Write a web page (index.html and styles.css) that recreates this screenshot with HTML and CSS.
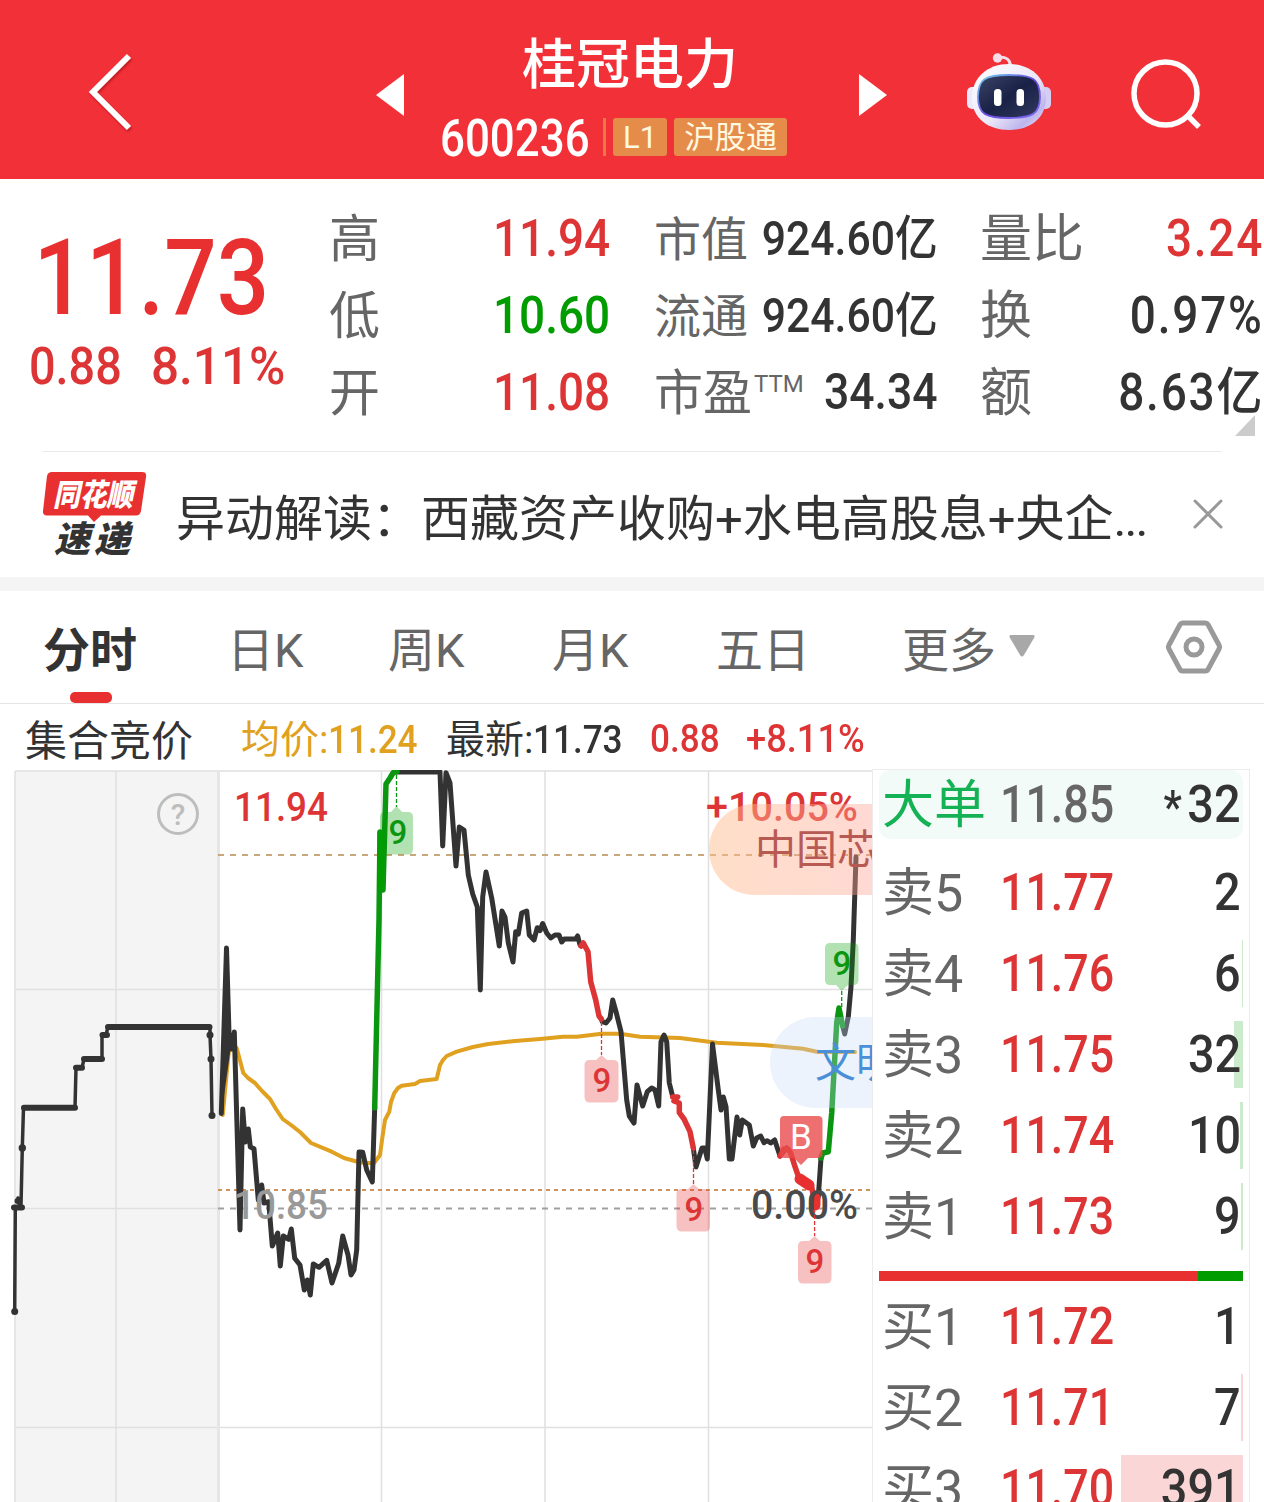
FILE: index.html
```html
<!DOCTYPE html>
<html lang="zh-CN">
<head>
    <meta charset="UTF-8">
    <meta name="viewport" content="width=device-width, initial-scale=1.0">
    <title>桂冠电力 600236</title>
    <link rel="stylesheet" href="styles.css">
</head>
<body>
    <header class="header">
        <svg class="back" width="46" height="80" viewBox="0 0 46 80"><path d="M42 4 L6 40 L42 76" fill="none" stroke="#fff" stroke-width="6"/></svg>
        <svg class="prev" width="28" height="42" viewBox="0 0 28 42"><path d="M28 0 V42 L0 21 Z" fill="#fff"/></svg>
        <div class="stock">
            <h1>桂冠电力</h1>
            <div class="stock-code">
                <span class="code num">600236</span>
                <i class="sliver"></i>
                <span class="badge level">L1</span>
                <span class="badge">沪股通</span>
            </div>
        </div>
        <svg class="next" width="28" height="42" viewBox="0 0 28 42"><path d="M0 0 V42 L28 21 Z" fill="#fff"/></svg>
        <svg class="robot" width="86" height="80" viewBox="966 52 86 80">
            <defs>
                <linearGradient id="shell" x1="0" y1="0" x2="1" y2="1">
                    <stop offset="0" stop-color="#fff"/>
                    <stop offset="0.55" stop-color="#ece8f8"/>
                    <stop offset="0.8" stop-color="#bdb6ee"/>
                    <stop offset="1" stop-color="#f5e6f0"/>
                </linearGradient>
                <linearGradient id="rim" x1="0" y1="0" x2="1" y2="1">
                    <stop offset="0" stop-color="#6fd6ea"/>
                    <stop offset="0.5" stop-color="#6a4be0"/>
                    <stop offset="1" stop-color="#7d6cf0"/>
                </linearGradient>
                <linearGradient id="visor" x1="0" y1="0" x2="1" y2="1">
                    <stop offset="0" stop-color="#3b4468"/>
                    <stop offset="0.5" stop-color="#1a2146"/>
                    <stop offset="1" stop-color="#323a60"/>
                </linearGradient>
            </defs>
            <path d="M998 57.500 Q1010 56 1010.500 66" fill="none" stroke="#f3dfe9" stroke-width="3"/>
            <circle cx="997.500" cy="58" r="4.700" fill="#f6dde8"/>
            <rect x="967" y="87" width="12" height="22" rx="5" fill="#eee9fa"/>
            <rect x="1039" y="87" width="12" height="22" rx="5" fill="#d5cdf4"/>
            <path d="M1009 64 C1030 64 1046 77 1046 98 C1046 118 1030 130 1009 130 C988 130 972 118 972 98 C972 77 988 64 1009 64 Z" fill="url(#shell)"/>
            <path d="M1009 75 C1033 75 1040 79 1040 97 C1040 114 1032 118 1009 118 C986 118 978 114 978 97 C978 79 985 75 1009 75 Z" fill="url(#visor)" stroke="url(#rim)" stroke-width="1.800"/>
            <rect x="994" y="89" width="7.500" height="17" rx="3.500" fill="#fff"/>
            <rect x="1016.500" y="89" width="7.500" height="17" rx="3.500" fill="#fff"/>
        </svg>
        <svg class="search" width="72" height="72" viewBox="0 0 72 72"><circle cx="35.500" cy="35.500" r="31.500" fill="none" stroke="#fff" stroke-width="5.500"/><path d="M56 56 L69 69" stroke="#fff" stroke-width="5.500"/></svg>
    </header>

    <section class="quote">
        <div class="price-box">
            <div class="price num">11.73</div>
            <div class="change"><span class="num">0.88</span><span class="num">8.11%</span></div>
        </div>
        <dl class="stats range">
            <dt>高</dt><dd class="num up">11.94</dd>
            <dt>低</dt><dd class="num down">10.60</dd>
            <dt>开</dt><dd class="num up">11.08</dd>
        </dl>
        <dl class="stats value">
            <dt>市值</dt><dd class="num">924.60亿</dd>
            <dt>流通</dt><dd class="num">924.60亿</dd>
            <dt class="pe">市盈<sup>TTM</sup></dt><dd class="num pe-num">34.34</dd>
        </dl>
        <dl class="stats trade">
            <dt>量比</dt><dd class="num up">3.24</dd>
            <dt>换</dt><dd class="num">0.97%</dd>
            <dt>额</dt><dd class="num">8.63亿</dd>
        </dl>
        <i class="corner"></i>
    </section>

    <section class="news">
        <svg class="news-logo" width="106" height="88" viewBox="42 470 106 88">
            <path d="M52 472 H142 Q147 472 146 477 L141 511 Q140 515.500 136 515.500 H101 L94 522 L88 515.500 H47 Q42.500 515.500 43 511 L47 476 Q48 472 52 472 Z" fill="#e93030"/>
            <text class="logo-top" x="53" y="506" textLength="80" lengthAdjust="spacingAndGlyphs">同花顺</text>
            <text class="logo-bottom" x="54" y="552" textLength="76">速递</text>
        </svg>
        <p>异动解读：西藏资产收购+水电高股息+央企<span>...</span></p>
        <svg class="close" width="30" height="30" viewBox="0 0 30 30"><path d="M2 2 L28 28 M28 2 L2 28" stroke="#999" stroke-width="3" stroke-linecap="round"/></svg>
    </section>

    <nav class="tabs">
        <a class="tab active">分时</a>
        <a class="tab">日K</a>
        <a class="tab">周K</a>
        <a class="tab">月K</a>
        <a class="tab">五日</a>
        <a class="tab more">更多<svg width="26" height="22" viewBox="0 0 26 22"><path d="M2 0 H24 Q26.500 0 25 3 L15 20 Q13 23 11 20 L1 3 Q-0.500 0 2 0 Z" fill="#a8a8a8"/></svg></a>
        <svg class="setting" width="56" height="54" viewBox="0 0 56 54"><path d="M16.500 3 H39.500 Q41 3 42 4.500 L53 25 Q54 27 53 29 L42 49.500 Q41 51 39.500 51 H16.500 Q15 51 14 49.500 L3 29 Q2 27 3 25 L14 4.500 Q15 3 16.500 3 Z" fill="none" stroke="#999" stroke-width="5"/><circle cx="28" cy="27" r="8" fill="none" stroke="#999" stroke-width="5"/></svg>
    </nav>

    <div class="legend">
        <span class="auction">集合竞价</span>
        <span class="avg">均价:<b class="num">11.24</b></span>
        <span class="last">最新:<b class="num">11.73</b></span>
        <span class="num diff">0.88</span>
        <span class="num pct">+8.11%</span>
    </div>

    <main class="market">
        <div class="chart">
            <svg width="872" height="732" viewBox="0 770 872 732">
                <!-- call auction area and grid -->
                <rect x="15" y="771" width="204" height="731" fill="#f4f4f4"/>
                <path class="grid" d="M15 771 H872 M15 989.500 H872 M15 1208.500 H219 M15 1427.500 H872 M15 771 V1502 M116 771 V1502 M381.500 771 V1502 M545 771 V1502 M708.500 771 V1502"/>
                <path d="M218.500 771 V1502" stroke="#e6e6e6" stroke-width="3"/>
                <path d="M218 855 H872" stroke="#c8a87a" stroke-width="2" stroke-dasharray="6 6"/>
                <path d="M218 1190 H872" stroke="#cd935c" stroke-width="2" stroke-dasharray="4 4"/>
                <path d="M218 1208.500 H872" stroke="#a0a0a0" stroke-width="2" stroke-dasharray="6 6"/>
                <circle cx="178" cy="814" r="19.500" fill="none" stroke="#bdbdbd" stroke-width="3"/>
                <text class="help" x="178" y="825" text-anchor="middle">?</text>

                <!-- labels under the curve -->
                <text class="axis up" x="234" y="821" textLength="94" lengthAdjust="spacingAndGlyphs">11.94</text>
                <text class="axis up" x="706" y="821" textLength="152" lengthAdjust="spacingAndGlyphs">+10.05%</text>

                <!-- average price -->
                <polyline class="line avg-line" points="222.700,1115 228.700,1052 231.700,1048 236.700,1048 243.300,1073 248,1078 255,1083 262,1091 270,1099 276,1109 282.700,1119 291,1125 300,1132 311,1143 331.700,1151.700 344,1158 358.300,1162 366,1163 374,1163 380,1155 382,1140 385,1120 389.300,1111.700 391,1102 394.300,1093 398,1088 401.700,1085.700 415,1084 420,1081 436.700,1079 440,1065 443,1060 446.700,1056 456.700,1051.700 473,1047 488.300,1044 515,1041 540,1039 563,1036.700 576.700,1036.700 601.700,1033.700 620,1033.700 640,1036.700 680,1038 716.700,1042.700 763,1045 803,1048.700 818,1052 855,1052"/>

                <!-- call auction -->
                <polyline class="line auction-line" points="14.700,1311.600 15.300,1207.600 20,1207 18,1198 21,1206 22.300,1148 23.500,1107.800 75,1107.800 76,1067.800 82,1067.800 84,1059 102,1059 102,1035 106,1035 108,1027 210,1027 210,1035 211,1059 212,1115.500"/>
                <path class="auction-thick" d="M14 1207.600 H22 M17.500 1201 H19 M24 1107.800 H75 M76 1067.800 H82 M84 1059 H102 M102.500 1035 H107 M108 1027 H209.500"/>
                <g fill="#333">
                    <circle cx="14.700" cy="1311.500" r="3.500"/>
                    <circle cx="22.300" cy="1148" r="3.700"/>
                    <circle cx="210" cy="1035" r="3.500"/>
                    <circle cx="211" cy="1059" r="3.500"/>
                    <circle cx="212" cy="1115.500" r="3.500"/>
                </g>

                <!-- price -->
                <polyline class="line" points="221.300,1113.500 226.500,948 229,1033 232,1049 234.300,1032 240,1230 242.700,1109 245.300,1142 248.300,1129 250.300,1147 254,1148.700 258.300,1200 261.700,1185 264,1203 268.700,1201.700 272.300,1246 277.700,1233 280.300,1266 283.300,1236 288.700,1239.300 291.300,1229 294.700,1258.300 300,1265 304.300,1290 307.300,1280 310.300,1295 313.300,1264 319,1267.300 326.700,1260.300 332,1283 338.700,1263.300 342.700,1236 348,1255 351,1275 354,1270 356.700,1250 359,1152 362.700,1152.300 366.700,1170 372.300,1182 374.700,1107.700"/>
                <path d="M226.500 948 L222 1110 L231 1046 Z" fill="#333"/>
                <polyline class="line" points="396,772 440,772 442.700,846 446,772.700 450,783 456,866 459.300,827 464,830 468.300,875 472.700,894 477.300,907 480.300,990 482.700,897 486,872 491.700,898 499.300,946 502,911 505,917 508.300,943 513,962 515.700,931.700 518.300,934 521.700,913 526.700,911 529.300,935 534,940 537.300,927.700 540,930.700 542.700,923.500 546.700,933 550.700,938 555,935 559,935 561.700,942 564.300,939 575.700,939 577.700,936 580,945"/>
                <polyline class="line" points="601.300,1019 602.300,1021.700 606,1023 610,1018 612.700,1000 616,1011.700 621,1031.700 626.700,1100 629.300,1116 634,1123 637,1085 642.700,1106 647.300,1091.700 651.700,1088 655,1090 658.700,1106 661,1041.700 664,1035 666.700,1041.700 669.300,1083 672.700,1096.700"/>
                <polyline class="line" points="693.300,1148 696,1167 702,1148 704.700,1148 707.300,1159 712.500,1044 718.300,1090 721,1110 723.300,1097 726,1106.700 729.300,1159 732,1159 737,1117 739.700,1135 742.300,1120 749.300,1125 753.300,1146 756.700,1138 760.700,1136 764,1142.700 767.300,1140.700 770.700,1143 774.700,1140 780,1156 786.700,1148"/>
                <polyline class="line" points="815,1206 818.300,1196.700 821,1158"/>
                <polyline class="line" points="842.700,1026 844.700,1034 848.300,1016.700 851,987 853.300,940 856,857"/>
                <polyline class="line red-line" points="581,946 583.300,943 588,951.700 590.700,981.700 595.700,1000 599,1016 601.300,1019"/>
                <polyline class="line red-line" points="672.700,1097 677.700,1097 674,1101 679.300,1103 679.300,1112.700 684,1119 690,1131.700 693.300,1148"/>
                <polyline class="line red-line" points="780,1156 784,1149 788,1149 790.700,1153 795,1166.700 799.300,1179 806.700,1181.700 811.700,1186.700 815,1206"/>
                <path d="M800 1179 L809 1185 M815 1198 V1205" stroke="#e93030" stroke-width="11" stroke-linecap="round"/>
                <polyline class="line green-line" points="374.700,1107.700 379,920 380,832 383,890 386,784 390,778 393.300,772.500 397,771.500"/>
                <path d="M380.500 832 V890" stroke="#009c00" stroke-width="6"/>
                <polyline class="line green-line" points="821,1158 822.700,1153 828.300,1151.700 831.700,1113 836.700,1023 839,1008 842.700,1026"/>

                <text class="axis" fill="#999" x="234" y="1219" textLength="94" lengthAdjust="spacingAndGlyphs">10.85</text>
                <text class="axis" fill="#4a4a4a" x="751" y="1219" textLength="107" lengthAdjust="spacingAndGlyphs">0.00%</text>

                <!-- signal tags -->
                <g class="tag-red">
                    <path class="leader" d="M601.500 1022 V1055 M693.500 1150 V1184 M814.600 1209 V1236"/>
                    <path d="M590 1060 H596 L601.500 1055 L607 1060 H613 Q618.500 1060 618.500 1065 V1097 Q618.500 1102.500 613 1102.500 H590 Q584.500 1102.500 584.500 1097 V1065 Q584.500 1060 590 1060 Z"/>
                    <path d="M682 1189 H688 L693.500 1184 L699 1189 H705 Q710 1189 710 1194 V1226 Q710 1231.500 705 1231.500 H682 Q676.500 1231.500 676.500 1226 V1194 Q676.500 1189 682 1189 Z"/>
                    <path d="M803 1241 H809 L814.600 1236 L820 1241 H826 Q831.500 1241 831.500 1246 V1278 Q831.500 1283.500 826 1283.500 H803 Q798 1283.500 798 1278 V1246 Q798 1241 803 1241 Z"/>
                    <text x="602" y="1092">9</text>
                    <text x="694" y="1221">9</text>
                    <text x="815" y="1273">9</text>
                </g>
                <g class="tag-green">
                    <path class="leader" d="M396.500 775 V807 M841.700 991 V1007"/>
                    <path d="M385 812 H391 L396.500 806 L402 812 H408 Q413 812 413 817 V849 Q413 854.500 408 854.500 H385 Q380 854.500 380 849 V817 Q380 812 385 812 Z"/>
                    <path d="M830 943 H853 Q858.500 943 858.500 948 V980 Q858.500 985 853 985 H848 L841.700 991 L836 985 H830 Q825 985 825 980 V948 Q825 943 830 943 Z"/>
                    <text x="398" y="844">9</text>
                    <text x="842" y="975">9</text>
                </g>
                <path d="M784 1116 H818 Q822.500 1116 822.500 1120 V1154 Q822.500 1158 818 1158 H808 L801 1165 L794 1158 H784 Q780 1158 780 1154 V1120 Q780 1116 784 1116 Z" fill="#ea4b4b" fill-opacity="0.800"/>
                <text class="buy-mark" x="801" y="1149">B</text>
            </svg>
            <span class="bullet hot">中国芯</span>
            <span class="bullet cool">文明</span>
        </div>

        <div class="book">
            <div class="row big"><span class="label">大单</span><span class="num cost">11.85</span><span class="num qty"><small>*</small>32</span></div>
            <div class="row"><span class="label">卖5</span><span class="num cost">11.77</span><span class="num qty">2</span></div>
            <div class="row"><span class="label">卖4</span><span class="num cost">11.76</span><span class="num qty">6</span><i class="vol sell" style="width:1px"></i></div>
            <div class="row"><span class="label">卖3</span><span class="num cost">11.75</span><span class="num qty">32</span><i class="vol sell" style="width:9px"></i></div>
            <div class="row"><span class="label">卖2</span><span class="num cost">11.74</span><span class="num qty">10</span><i class="vol sell" style="width:3px"></i></div>
            <div class="row"><span class="label">卖1</span><span class="num cost">11.73</span><span class="num qty">9</span><i class="vol sell" style="width:2px"></i></div>
            <div class="ratio"><i style="width:319px"></i></div>
            <div class="row"><span class="label">买1</span><span class="num cost">11.72</span><span class="num qty">1</span></div>
            <div class="row"><span class="label">买2</span><span class="num cost">11.71</span><span class="num qty">7</span><i class="vol buy" style="width:2px"></i></div>
            <div class="row"><span class="label">买3</span><span class="num cost">11.70</span><span class="num qty">391</span><i class="vol buy" style="width:122px"></i></div>
        </div>
    </main>
</body>
</html>
```
FILE: styles.css
```css
* {
    box-sizing: border-box;
}
body {
    margin: 0;
    width: 1264px;
    height: 1502px;
    overflow: hidden;
    background: #fff;
    color: #333;
    font-family: Roboto, "Noto Sans CJK SC", sans-serif;
}
h1, p, dl, dt, dd {
    margin: 0;
    font-weight: 400;
}
svg {
    display: block;
    flex: none;
}
.num {
    display: inline-block;
    font-weight: 500;
    white-space: nowrap;
    transform: scaleX(0.9);
}
.up {
    color: #dd3535;
    fill: #dd3535;
}
.down {
    color: #009c00;
}

/* header */
.header {
    display: flex;
    align-items: flex-start;
    height: 179px;
    background: #f23038;
    color: #fff;
}
.back {
    margin: 52px 0 0 87px;
    filter: drop-shadow(1px 2px 1px rgba(120,0,0,0.4));
}
.prev {
    margin: 74px 0 0 243px;
}
.stock {
    width: 455px;
    padding-top: 34px;
}
.stock h1 {
    padding-left: 118px;
    font-size: 54px;
    line-height: 64px;
    font-weight: 500;
}
.stock-code {
    display: flex;
    align-items: center;
    height: 38px;
    margin-top: 20px;
    padding-left: 36px;
}
.stock-code .code {
    width: 163px;
    padding-top: 4px;
    font-size: 51px;
    line-height: 38px;
    transform-origin: left;
    transform: scaleX(0.86);
}
.sliver {
    width: 3px;
    height: 38px;
    margin-right: 7px;
    background: #ec7844;
}
.badge {
    height: 38px;
    margin-right: 7px;
    padding: 1px 10px 0;
    border-radius: 3px;
    background: #e58c4a;
    color: #fff8e0;
    font-size: 31px;
    line-height: 38px;
}
.next {
    margin-top: 74px;
}
.robot {
    margin: 52px 0 0 79px;
}
.search {
    margin: 58px 0 0 78px;
}

/* quote */
.quote {
    position: relative;
    display: flex;
    height: 273px;
    padding-top: 21px;
}
.quote::after {
    content: "";
    position: absolute;
    left: 42px;
    right: 42px;
    bottom: 0;
    height: 1px;
    background: #eaeaea;
}
.price-box {
    width: 329px;
    color: #dd3535;
}
.price-box .price {
    display: block;
    margin-top: 19px;
    padding-left: 38px;
    color: #e93030;
    font-size: 105px;
    line-height: 120px;
    transform-origin: left;
    transform: scaleX(0.88);
}
.change {
    display: flex;
    padding-left: 29px;
    font-size: 52px;
    line-height: 56px;
}
.change .num {
    width: 122px;
    transform-origin: left;
}
.change .num:last-child {
    transform: scaleX(0.95);
}
.stats {
    display: grid;
    grid-template-rows: repeat(3, 77px);
    align-items: center;
    font-size: 51px;
    line-height: 77px;
    height: 231px;
}
.stats dt {
    padding-top: 2px;
    color: #666;
    line-height: 75px;
    white-space: nowrap;
}
.stats dd {
    justify-self: end;
    transform-origin: right;
}
.range {
    grid-template-columns: 50px 1fr;
    width: 281px;
    margin-right: 44px;
}
.value {
    grid-template-columns: 94px 190px;
    width: 284px;
    margin-right: 42px;
}
.value dt {
    font-size: 47px;
}
.value dd {
    font-size: 48px;
    transform: scaleX(0.89);
}
.value .pe {
    font-size: 49px;
}
.value sup {
    margin-left: 2px;
    font-size: 24px;
    line-height: 0;
    vertical-align: 18px;
}
.value .pe-num {
    font-size: 50px;
}
.trade {
    grid-template-columns: 104px 1fr;
    width: 284px;
    flex: none;
}
.trade dt {
    font-size: 52px;
}
.trade dd {
    letter-spacing: 2px;
}
.corner {
    position: absolute;
    right: 9px;
    bottom: 16px;
    border-left: 20px solid transparent;
    border-bottom: 21px solid #ccc;
}

/* news */
.news {
    display: flex;
    align-items: center;
    height: 139px;
    padding: 0 0 1px 42px;
    border-bottom: 14px solid #f4f4f4;
}
.news-logo {
    overflow: visible;
}
.logo-top, .logo-bottom {
    font-family: "Noto Sans CJK SC", sans-serif;
    font-size: 31px;
    font-weight: 900;
    font-style: italic;
    fill: #fff;
}
.logo-bottom {
    font-size: 36px;
    fill: #333;
}
.news p {
    width: 1045px;
    padding-left: 28px;
    font-size: 49px;
    white-space: nowrap;
}
.news p span {
    letter-spacing: -2px;
}

/* tabs */
.tabs {
    position: relative;
    display: flex;
    align-items: center;
    height: 113px;
    padding-left: 43px;
    border-bottom: 1px solid #e6e6e6;
    color: #666;
    font-size: 47px;
}
.tab {
    width: 161px;
    padding-bottom: 2px;
    white-space: nowrap;
}
.tab:nth-child(1) {
    width: 184px;
}
.tab:nth-child(3), .tab:nth-child(4) {
    width: 164px;
}
.tab:nth-child(5) {
    width: 186px;
}
.tab.active {
    color: #333;
    font-weight: 700;
}
.tab.active::after {
    content: "";
    position: absolute;
    left: 70px;
    bottom: 0;
    width: 42px;
    height: 11px;
    border-radius: 5px;
    background: #e93030;
}
.tab.more {
    display: flex;
    align-items: center;
    gap: 13px;
    width: 264px;
}

/* legend */
.legend {
    display: flex;
    align-items: center;
    height: 66px;
    padding: 0 0 2px 25px;
    font-size: 39px;
    white-space: nowrap;
}
.legend .num {
    transform-origin: left;
}
.legend .auction {
    width: 216px;
    padding-top: 2px;
    font-size: 42px;
}
.legend .avg {
    width: 205px;
    color: #e0a020;
}
.legend .last {
    width: 204px;
}
.diff, .pct {
    padding-top: 5px;
    color: #dd3535;
}
.diff {
    width: 96px;
}
.legend .pct {
    transform: scaleX(0.93);
}

/* chart */
.market {
    display: flex;
    height: 732px;
}
.chart {
    position: relative;
    width: 872px;
    height: 732px;
    overflow: hidden;
}
.grid {
    fill: none;
    stroke: #e0e0e0;
    stroke-width: 1.5;
}
.line {
    fill: none;
    stroke: #333;
    stroke-width: 5;
    stroke-linejoin: round;
    stroke-linecap: round;
}
.avg-line {
    stroke: #e0a020;
    stroke-width: 4;
}
.auction-line {
    stroke-width: 3.5;
}
.auction-thick {
    fill: none;
    stroke: #333;
    stroke-width: 6;
    stroke-linecap: round;
}
.red-line {
    stroke: #dd3535;
    stroke-width: 5.5;
}
.green-line {
    stroke: #0a960f;
    stroke-width: 5.5;
}
.axis {
    font-size: 41px;
    font-weight: 500;
}
.help {
    fill: #bdbdbd;
    font-size: 30px;
    font-weight: 500;
}
.tag-red path {
    fill: rgba(230,50,50,0.3);
}
.tag-green path {
    fill: rgba(0,156,0,0.3);
}
.tag-red .leader, .tag-green .leader {
    fill: none;
    stroke: #dd3535;
    stroke-width: 1.3;
    stroke-dasharray: 4 2;
}
.tag-green .leader {
    stroke: #0a960f;
}
.tag-red text, .tag-green text {
    fill: #dd3535;
    font-size: 33px;
    font-weight: 500;
    text-anchor: middle;
}
.tag-green text {
    fill: #0a960f;
}
.buy-mark {
    fill: #fff;
    font-size: 35px;
    text-anchor: middle;
}
.bullet {
    position: absolute;
    height: 91px;
    border-radius: 46px 0 0 46px;
    font-size: 41px;
    line-height: 92px;
    white-space: nowrap;
}
.hot {
    top: 34px;
    left: 709px;
    padding-left: 46px;
    background: linear-gradient(90deg, rgba(255,190,145,0.5), rgba(255,160,145,0.4) 160px);
    color: #b85a54;
}
.cool {
    top: 247px;
    left: 770px;
    padding-left: 45px;
    background: rgba(195,218,250,0.32);
    color: #4a8fd8;
}

/* order book */
.book {
    width: 378px;
    height: 733px;
    padding: 0 6px;
    border: 1px solid #ececec;
    border-bottom: none;
    margin-top: -1px;
}
.row {
    position: relative;
    isolation: isolate;
    display: grid;
    grid-template-columns: 118px 124px 1fr;
    align-items: center;
    height: 67px;
    margin-bottom: 14px;
    padding: 0 2px 0 3px;
    font-size: 52px;
    line-height: 67px;
}
.row.big {
    height: 69px;
    margin-bottom: 20px;
    border-radius: 12px;
    background: #f2fbf7;
}
.label {
    padding-top: 2px;
    color: #666;
    line-height: 65px;
    white-space: nowrap;
}
.big .label {
    color: #14b155;
}
.row .cost {
    color: #dd3535;
    transform-origin: left;
    transform: scaleX(0.86);
}
.row.big .cost {
    color: #666;
}
.qty {
    justify-self: end;
    transform-origin: right;
}
.qty small {
    margin-right: 6px;
    font-size: 46px;
    line-height: 0;
    vertical-align: -1px;
}
/* volume bar sits behind the quantity */
.vol {
    position: absolute;
    z-index: -1;
    right: 0;
    top: 0;
    height: 67px;
    background: rgba(0,156,0,0.2);
}
.vol.buy {
    background: rgba(230,50,50,0.2);
}
.ratio {
    height: 10px;
    margin: 21px 0 12px;
    background: #009c00;
}
.ratio i {
    display: block;
    height: 10px;
    background: #e93030;
}
```
